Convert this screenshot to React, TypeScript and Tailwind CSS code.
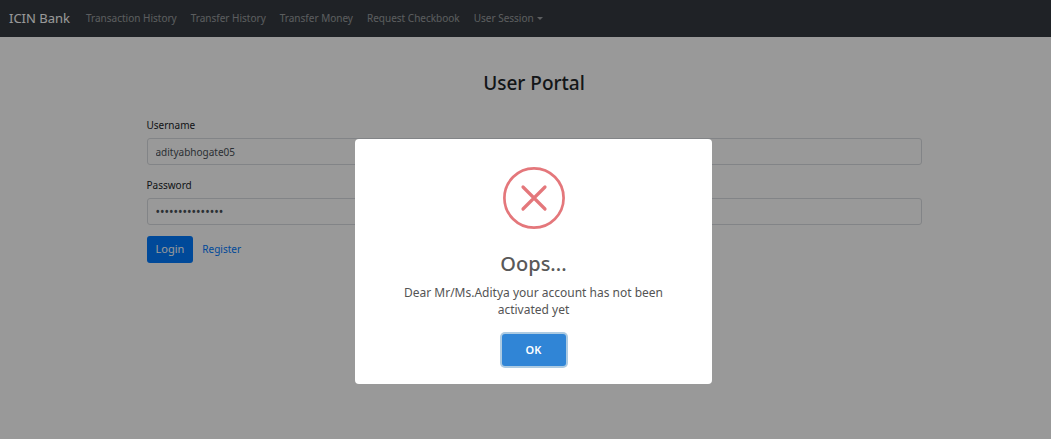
import { useState } from "react";

const links = [
  "Transaction History",
  "Transfer History",
  "Transfer Money",
  "Request Checkbook",
];

function Navbar() {
  return (
    <nav className="flex h-[37px] items-center bg-[#343a40] pl-[9px]">
      <a href="#" className="mr-4 text-[13px] text-white">
        ICIN Bank
      </a>
      <ul className="flex items-center gap-[14px] text-[10px] text-white/50">
        {links.map((label) => (
          <li key={label}>
            <a href="#">{label}</a>
          </li>
        ))}
        <li>
          <button type="button" className="flex items-center gap-[3px]">
            User Session
            <svg width="6" height="3" viewBox="0 0 6 3" fill="currentColor" aria-hidden="true">
              <path d="M0 0h6L3 3z" />
            </svg>
          </button>
        </li>
      </ul>
    </nav>
  );
}

type FieldProps = { id: string; label: string; type: string; value: string; textSize: string };

function Field({ id, label, type, value, textSize }: FieldProps) {
  const [text, setText] = useState(value);
  return (
    <div className="mb-[11px]">
      <label htmlFor={id} className="mb-[3px] block leading-[19px]">
        {label}
      </label>
      <input
        id={id}
        type={type}
        value={text}
        onChange={(e) => setText(e.target.value)}
        className={`block h-[27px] w-full rounded-[3px] border border-[#d9dde1] bg-white px-2 text-[#495057] outline-none ${textSize}`}
      />
    </div>
  );
}

function LoginForm() {
  return (
    <main className="pt-[33px] pl-[17px] text-[#212529]">
      <h1 className="text-center text-[19px] leading-[26px] font-medium">User Portal</h1>
      <form className="mx-auto mt-5 max-w-[775px] text-[10px]" onSubmit={(e) => e.preventDefault()}>
        <Field id="username" label="Username" type="text" value="adityabhogate05" textSize="text-[10px]" />
        <Field id="password" label="Password" type="password" value="adityabhogate05" textSize="text-[12px]" />
        <div className="flex items-center gap-[9px]">
          <button type="submit" className="h-[27px] rounded-[3px] bg-[#007bff] px-[9px] text-[11px] text-white">
            Login
          </button>
          <a href="#" className="text-[10px] text-[#007bff]">
            Register
          </a>
        </div>
      </form>
    </main>
  );
}

function ErrorDialog() {
  return (
    <div className="fixed inset-0 flex items-start justify-center bg-black/40 pt-[139px] pl-4">
      <div
        role="alertdialog"
        aria-labelledby="dialog-title"
        aria-describedby="dialog-text"
        className="flex w-[357px] flex-col items-center rounded-[4px] bg-white px-10 pt-7 pb-[18px] text-center"
      >
        <svg width="62" height="62" viewBox="0 0 62 62" fill="none" stroke="#e4777b" aria-hidden="true">
          <circle cx="31" cy="31" r="29.6" strokeWidth="2.7" />
          <path d="M20 20 42 42M42 20 20 42" strokeWidth="3.2" strokeLinecap="round" />
        </svg>
        <h2 id="dialog-title" className="mt-[21px] text-[20px] leading-7 font-medium text-[#595959]">
          Oops...
        </h2>
        <p id="dialog-text" className="mt-[6px] text-[12px] leading-[17px] text-[#545454]">
          Dear Mr/Ms.Aditya your account has not been activated yet
        </p>
        <button
          type="button"
          className="mt-4 h-8 w-16 rounded-[3px] bg-[#3085d6] text-[11px] font-semibold text-white ring-2 ring-[#adcbe2]"
        >
          OK
        </button>
      </div>
    </div>
  );
}

export default function App() {
  return (
    <div className="min-h-screen bg-white font-['Noto_Sans','Open_Sans',sans-serif]">
      <Navbar />
      <LoginForm />
      <ErrorDialog />
    </div>
  );
}
